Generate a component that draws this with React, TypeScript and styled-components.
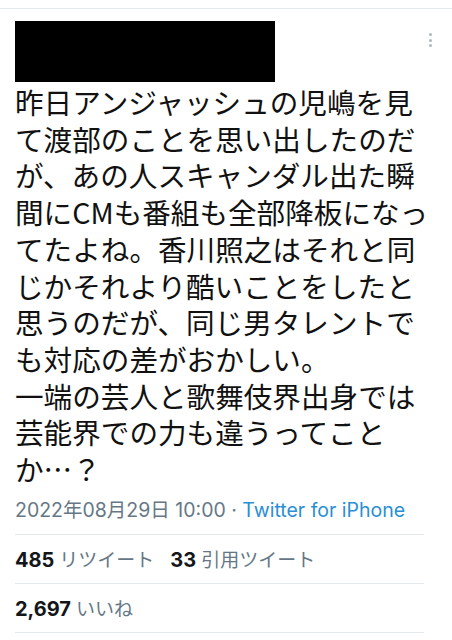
import styled, { createGlobalStyle } from "styled-components";

const GlobalStyle = createGlobalStyle`
  html, body {
    margin: 0;
    padding: 0;
    background: #ffffff;
  }
  body {
    font-family: Inter, "Noto Sans CJK JP", sans-serif;
    color: #14171a;
  }
`;

const grey = "#657786";
const blue = "#2a8fd3";
const rule = "#e3e8ec";

// The tweet sits under a thin top rule, as cropped from the timeline.
const Page = styled.div`
  width: 452px;
  height: 640px;
  padding-top: 8px;
  box-sizing: border-box;
  overflow: hidden;
`;

const Tweet = styled.article`
  border-top: 1px solid ${rule};
  padding: 12px 14px 0 15px;
`;

const Header = styled.div`
  display: flex;
  justify-content: space-between;
  align-items: flex-start;
`;

// Author name and handle are blacked out in the screenshot.
const Redacted = styled.div`
  width: 260px;
  height: 61px;
  background: #000;
`;

const MoreButton = styled.div`
  display: flex;
  flex-direction: column;
  gap: 2.5px;
  margin: 12px 6px 0 0;
`;

const Dot = styled.span`
  width: 3px;
  height: 3px;
  border-radius: 50%;
  background: #aab8c2;
`;

const Body = styled.p`
  margin: 2px 0 0;
  width: 424px;
  font-family: "Noto Sans CJK JP", sans-serif;
  font-size: 28.6px;
  line-height: 36.7px;
  white-space: pre-wrap;
  line-break: strict;
  color: #111;
`;

const Meta = styled.div`
  margin-top: 10px;
  padding-bottom: 12px;
  margin-right: 14px;
  font-size: 19.5px;
  line-height: 24px;
  color: ${grey};
  border-bottom: 1px solid ${rule};
  white-space: nowrap;
`;

const Source = styled.span`
  color: ${blue};
`;

const StatRow = styled.div`
  display: flex;
  gap: 16px;
  align-items: center;
  height: 48px;
  margin-right: 14px;
  border-bottom: 1px solid ${rule};
  font-size: 19px;
`;

const Stat = styled.span`
  color: ${grey};
`;

const Count = styled.b`
  color: #14171a;
  font-size: 20px;
  font-weight: 700;
  margin-right: 5px;
`;

const text =
  "昨日アンジャッシュの児嶋を見て渡部のことを思い出したのだが、あの人スキャンダル出た瞬間にCMも番組も全部降板になってたよね。香川照之はそれと同じかそれより酷いことをしたと思うのだが、同じ男タレントでも対応の差がおかしい。\n一端の芸人と歌舞伎界出身では芸能界での力も違うってことか…？";

const App = () => (
  <Page>
    <GlobalStyle />
    <Tweet>
      <Header>
        <Redacted />
        <MoreButton>
          <Dot />
          <Dot />
          <Dot />
        </MoreButton>
      </Header>
      <Body>{text}</Body>
      <Meta>
        2022年08月29日 10:00 · <Source>Twitter for iPhone</Source>
      </Meta>
      <StatRow>
        <Stat>
          <Count>485</Count>リツイート
        </Stat>
        <Stat>
          <Count>33</Count>引用ツイート
        </Stat>
      </StatRow>
      <StatRow>
        <Stat>
          <Count>2,697</Count>いいね
        </Stat>
      </StatRow>
    </Tweet>
  </Page>
);

export default App;
